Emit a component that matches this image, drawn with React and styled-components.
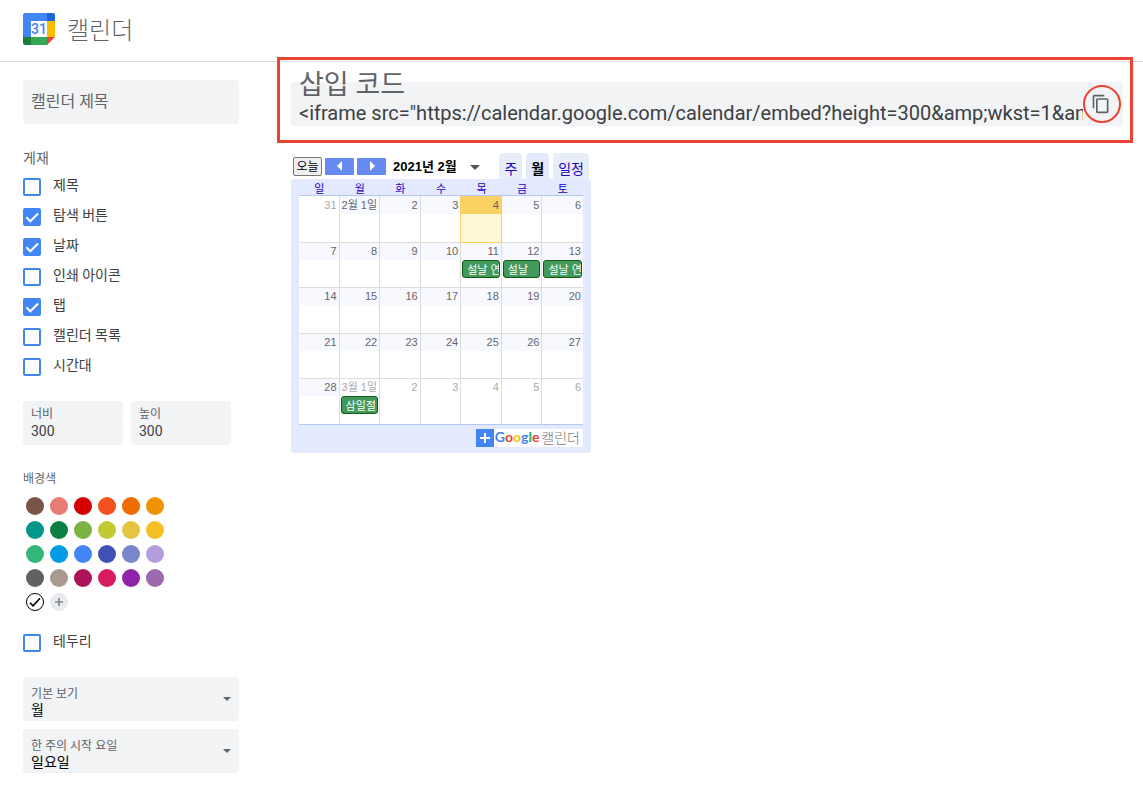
import styled, { createGlobalStyle } from "styled-components";

import { useState } from "react";

const COLORS = {
  text: "#3c4043",
  muted: "#5f6368",
  field: "#f1f3f4",
  blue: "#4285f4",
  highlight: "#ea4335",
  calendar: "#e3e9ff",
  calendarLink: "#2200cc",
};

const EMBED_CODE =
  '<iframe src="https://calendar.google.com/calendar/embed?height=300&amp;wkst=1&amp;bgcolor=%23ffffff&amp;ctz=Asia%2FSeoul" style="border-width:0" width="300" height="300"></iframe>';

const SWATCHES = [
  "#795548", "#e67c73", "#d50000", "#f4511e", "#ef6c00", "#f09300",
  "#009688", "#0b8043", "#7cb342", "#c0ca33", "#e4c441", "#f6bf26",
  "#33b679", "#039be5", "#4285f4", "#3f51b5", "#7986cb", "#b39ddb",
  "#616161", "#a79b8e", "#ad1457", "#d81b60", "#8e24aa", "#9e69af",
];

const WEEKDAYS = ["일", "월", "화", "수", "목", "금", "토"];

const WEEKS = [
  [
    { day: "31", other: true },
    { day: "2월 1일" },
    { day: "2" },
    { day: "3" },
    { day: "4", today: true },
    { day: "5" },
    { day: "6" },
  ],
  [
    { day: "7" },
    { day: "8" },
    { day: "9" },
    { day: "10" },
    { day: "11", event: "설날 연휴" },
    { day: "12", event: "설날" },
    { day: "13", event: "설날 연휴" },
  ],
  ["14", "15", "16", "17", "18", "19", "20"].map((day) => ({ day })),
  ["21", "22", "23", "24", "25", "26", "27"].map((day) => ({ day })),
  [
    { day: "28" },
    { day: "3월 1일", other: true, event: "삼일절" },
    { day: "2", other: true },
    { day: "3", other: true },
    { day: "4", other: true },
    { day: "5", other: true },
    { day: "6", other: true },
  ],
];

const CalendarLogo = () => (
  <svg width="32" height="32" viewBox="0 0 32 32" aria-hidden="true">
    <path d="M2 0h22v8H8v16H0V2a2 2 0 0 1 2-2z" fill="#4285f4" />
    <path d="M24 0h6a2 2 0 0 1 2 2v6h-8z" fill="#1967d2" />
    <path d="M24 8h8v16h-8z" fill="#fbbc04" />
    <path d="M8 24h16v8H8z" fill="#34a853" />
    <path d="M0 24h8v8H2a2 2 0 0 1-2-2z" fill="#188038" />
    <path d="M24 24h8l-8 8z" fill="#ea4335" />
    <path d="M8 8h16v16H8z" fill="#fff" />
    <text
      x="16"
      y="21"
      textAnchor="middle"
      fontFamily="Roboto, sans-serif"
      fontSize="14"
      fontWeight="500"
      fill="#4285f4"
    >
      31
    </text>
  </svg>
);

const CopyIcon = () => (
  <svg width="20" height="20" viewBox="0 0 24 24" aria-hidden="true">
    <path
      d="M16 1H4c-1.1 0-2 .9-2 2v14h2V3h12V1zm3 4H8c-1.1 0-2 .9-2 2v14c0 1.1.9 2 2 2h11c1.1 0 2-.9 2-2V7c0-1.1-.9-2-2-2zm0 16H8V7h11v14z"
      fill={COLORS.muted}
    />
  </svg>
);

const Checkbox = ({ label, defaultChecked = false }) => {
  const [checked, setChecked] = useState(defaultChecked);

  return (
    <CheckLabel>
      <CheckStack>
        <CheckInput
          type="checkbox"
          checked={checked}
          onChange={(e) => setChecked(e.target.checked)}
        />
        {checked && (
          <CheckMark viewBox="0 0 18 18" aria-hidden="true">
            <path
              d="M3.3 9.3l4 4 7.8-7.8"
              fill="none"
              stroke="#fff"
              strokeWidth="2"
            />
          </CheckMark>
        )}
      </CheckStack>
      <CheckText>{label}</CheckText>
    </CheckLabel>
  );
};

const SelectField = ({ id, label, options }) => (
  <SelectBox>
    <SmallLabel htmlFor={id}>{label}</SmallLabel>
    <Select id={id}>
      {options.map((option) => (
        <option key={option}>{option}</option>
      ))}
    </Select>
    <SelectArrow viewBox="0 0 8 4" aria-hidden="true">
      <path d="M0 0h8L4 4z" fill={COLORS.muted} />
    </SelectArrow>
  </SelectBox>
);

const Sidebar = () => (
  <Aside>
    <TitleInput type="text" placeholder="캘린더 제목" aria-label="캘린더 제목" />

    <Group>
      <GroupTitle>게재</GroupTitle>
      <Checkbox label="제목" />
      <Checkbox label="탐색 버튼" defaultChecked />
      <Checkbox label="날짜" defaultChecked />
      <Checkbox label="인쇄 아이콘" />
      <Checkbox label="탭" defaultChecked />
      <Checkbox label="캘린더 목록" />
      <Checkbox label="시간대" />
    </Group>

    <SizeRow>
      <SizeBox>
        <SmallLabel htmlFor="width">너비</SmallLabel>
        <SizeInput id="width" type="text" defaultValue="300" />
      </SizeBox>
      <SizeBox>
        <SmallLabel htmlFor="height">높이</SmallLabel>
        <SizeInput id="height" type="text" defaultValue="300" />
      </SizeBox>
    </SizeRow>

    <ColorTitle>배경색</ColorTitle>
    <Swatches>
      {SWATCHES.map((color) => (
        <Swatch key={color} $color={color} aria-label={color} />
      ))}
      <Swatch $color="#ffffff" $selected aria-label="#ffffff">
        <svg width="16" height="16" viewBox="0 0 16 16" aria-hidden="true">
          <path
            d="M3 8.8l3 3 7-7.6"
            fill="none"
            stroke="#000"
            strokeWidth="1.6"
          />
        </svg>
      </Swatch>
      <Swatch $color="#e8eaed" aria-label="맞춤 색상 추가">
        <svg width="18" height="18" viewBox="0 0 18 18" aria-hidden="true">
          <path d="M5 9h8M9 5v8" stroke="#80868b" strokeWidth="1.6" />
        </svg>
      </Swatch>
    </Swatches>

    <Checkbox label="테두리" />

    <Selects>
      <SelectField
        id="view"
        label="기본 보기"
        options={["월", "주", "일정"]}
      />
      <SelectField
        id="weekStart"
        label="한 주의 시작 요일"
        options={["일요일", "월요일", "토요일"]}
      />
    </Selects>
  </Aside>
);

const EmbedCode = () => (
  <EmbedArea>
    <EmbedField>
      <EmbedText>
        <EmbedLabel htmlFor="embed">삽입 코드</EmbedLabel>
        <EmbedInput id="embed" type="text" readOnly value={EMBED_CODE} />
      </EmbedText>
      <CopyButton
        aria-label="복사"
        onClick={() => navigator.clipboard.writeText(EMBED_CODE)}
      >
        <CopyIcon />
      </CopyButton>
    </EmbedField>
    <Highlight />
  </EmbedArea>
);

const CalendarPreview = () => (
  <Preview>
    <PreviewNav>
      <TodayButton>오늘</TodayButton>
      <ArrowButton aria-label="이전">
        <svg width="6" height="10" viewBox="0 0 6 10" aria-hidden="true">
          <path d="M5 0v10L0 5z" fill="#fff" />
        </svg>
      </ArrowButton>
      <ArrowButton aria-label="다음">
        <svg width="6" height="10" viewBox="0 0 6 10" aria-hidden="true">
          <path d="M1 0v10l5-5z" fill="#fff" />
        </svg>
      </ArrowButton>
      <MonthButton>
        2021년 2월
        <svg width="10" height="5" viewBox="0 0 10 5" aria-hidden="true">
          <path d="M0 0h10L5 5z" fill="#555" />
        </svg>
      </MonthButton>
      <Tabs>
        <Tab>주</Tab>
        <Tab $active>월</Tab>
        <Tab>일정</Tab>
      </Tabs>
    </PreviewNav>
    <PreviewBody>
      <MonthTable>
        <thead>
          <tr>
            {WEEKDAYS.map((name) => (
              <Weekday key={name}>{name}</Weekday>
            ))}
          </tr>
        </thead>
        <tbody>
          {WEEKS.map((week, index) => (
            <WeekRow key={index}>
              {week.map((item) => (
                <DayCell key={item.day} $today={item.today}>
                  <DayNumber $today={item.today} $other={item.other}>
                    {item.day}
                  </DayNumber>
                  {item.event && <EventChip>{item.event}</EventChip>}
                </DayCell>
              ))}
            </WeekRow>
          ))}
        </tbody>
      </MonthTable>
      <PreviewFooter>
        <GoogleLink href="#calendar">
          <PlusBox>
            <svg width="12" height="12" viewBox="0 0 12 12" aria-hidden="true">
              <path d="M1 6h10M6 1v10" stroke="#fff" strokeWidth="2" />
            </svg>
          </PlusBox>
          <GoogleText>
            <Letter $color="#4285f4">G</Letter>
            <Letter $color="#ea4335">o</Letter>
            <Letter $color="#fbbc04">o</Letter>
            <Letter $color="#4285f4">g</Letter>
            <Letter $color="#34a853">l</Letter>
            <Letter $color="#ea4335">e</Letter>
          </GoogleText>
          <ProductText>캘린더</ProductText>
        </GoogleLink>
      </PreviewFooter>
    </PreviewBody>
  </Preview>
);

const App = () => {
  return (
    <>
      <GlobalStyle />
      <Header>
        <CalendarLogo />
        <AppName>캘린더</AppName>
      </Header>
      <Page>
        <Sidebar />
        <Main>
          <EmbedCode />
          <CalendarPreview />
        </Main>
      </Page>
    </>
  );
};

export default App;

const GlobalStyle = createGlobalStyle`
  * {
    box-sizing: border-box;
  }

  body {
    margin: 0;
    background: #fff;
    color: ${COLORS.text};
    font-family: Roboto, "Noto Sans CJK KR", sans-serif;
    font-size: 14px;
  }

  button, input, select {
    font-family: inherit;
    margin: 0;
    padding: 0;
    border: none;
    outline: none;
    background: none;
  }

  button {
    cursor: pointer;
  }

  svg {
    display: block;
    flex: none;
  }
`;

const Header = styled.header`
  display: flex;
  align-items: center;
  gap: 12px;
  height: 62px;
  padding: 0 23px 3px;
  border-bottom: 1px solid #dadce0;
`;

const AppName = styled.h1`
  margin: 0;
  padding-top: 4px;
  font-size: 24px;
  font-weight: 300;
  line-height: 32px;
  color: ${COLORS.muted};
`;

const Page = styled.div`
  display: flex;
  align-items: flex-start;
  gap: 52px;
  padding: 18px 20px 20px 23px;
`;

const Aside = styled.aside`
  display: flex;
  flex-direction: column;
  flex: none;
  width: 216px;
`;

const TitleInput = styled.input`
  height: 44px;
  padding: 0 8px 2px;
  border-radius: 4px;
  background: ${COLORS.field};
  font-size: 16px;
  color: ${COLORS.text};

  &::placeholder {
    color: ${COLORS.muted};
  }
`;

const Group = styled.section`
  display: flex;
  flex-direction: column;
  margin-top: 24px;
`;

const GroupTitle = styled.h2`
  margin: 0 0 4px;
  font-size: 14px;
  font-weight: 400;
  line-height: 20px;
  color: ${COLORS.muted};
`;

const CheckLabel = styled.label`
  display: flex;
  align-items: center;
  gap: 12px;
  height: 30px;
  cursor: pointer;
`;

const CheckStack = styled.span`
  display: grid;
  width: 18px;
  height: 18px;
`;

const CheckInput = styled.input`
  grid-area: 1 / 1;
  appearance: none;
  width: 18px;
  height: 18px;
  border: 2px solid ${COLORS.blue};
  border-radius: 2px;
  background: ${(props) => (props.checked ? COLORS.blue : "#fff")};
`;

const CheckMark = styled.svg`
  grid-area: 1 / 1;
  width: 18px;
  height: 18px;
  pointer-events: none;
`;

const CheckText = styled.span`
  padding-bottom: 4px;
  line-height: 20px;
`;

const SizeRow = styled.div`
  display: flex;
  gap: 8px;
  margin-top: 19px;
`;

const SizeBox = styled.div`
  display: flex;
  flex-direction: column;
  width: 100px;
  height: 44px;
  padding: 5px 8px 4px;
  border-radius: 4px;
  background: ${COLORS.field};
`;

const SmallLabel = styled.label`
  font-size: 12px;
  line-height: 16px;
  color: ${COLORS.muted};
`;

const SizeInput = styled.input`
  width: 100%;
  height: 18px;
  font-size: 14px;
  color: ${COLORS.text};
`;

const ColorTitle = styled.h2`
  margin: 25px 0 7px;
  font-size: 12px;
  font-weight: 400;
  line-height: 18px;
  color: ${COLORS.muted};
`;

const Swatches = styled.div`
  display: grid;
  grid-template-columns: repeat(6, 18px);
  gap: 6px;
  margin: 2px 3px 17px;
`;

const Swatch = styled.button`
  display: grid;
  place-items: center;
  width: 18px;
  height: 18px;
  border: ${(props) => (props.$selected ? "1px solid #000" : "none")};
  border-radius: 50%;
  background: ${(props) => props.$color};
`;

const Selects = styled.div`
  display: flex;
  flex-direction: column;
  gap: 8px;
  margin-top: 19px;
`;

const SelectBox = styled.div`
  display: grid;
  grid-template-columns: 1fr 8px;
  grid-template-rows: 16px 16px;
  align-items: center;
  height: 44px;
  padding: 9px 8px 3px;
  border-radius: 4px;
  background: ${COLORS.field};
`;

const Select = styled.select`
  grid-area: 2 / 1 / 3 / 3;
  appearance: none;
  height: 18px;
  font-size: 14px;
  line-height: 18px;
  color: #000;
`;

const SelectArrow = styled.svg`
  grid-area: 1 / 2 / 3 / 3;
  width: 8px;
  height: 4px;
  margin-bottom: 6px;
  pointer-events: none;
`;

const Main = styled.main`
  flex: 1;
  min-width: 0;
  padding-top: 2px;
`;

const EmbedArea = styled.section`
  position: relative;
`;

const EmbedField = styled.div`
  display: flex;
  align-items: center;
  height: 44px;
  padding: 0 2px 0 8px;
  border-radius: 4px;
  background: ${COLORS.field};
`;

/* The enlarged label grows upwards over the edge of the field. */
const EmbedText = styled.div`
  display: flex;
  flex: 1;
  flex-direction: column;
  justify-content: flex-end;
  min-width: 0;
  height: 44px;
`;

const EmbedLabel = styled.label`
  font-size: 27px;
  line-height: 30px;
  color: ${COLORS.muted};
`;

const EmbedInput = styled.input`
  flex: none;
  width: 100%;
  height: 26px;
  font-size: 20px;
  color: ${COLORS.text};
`;

const CopyButton = styled.button`
  display: grid;
  place-items: center;
  flex: none;
  width: 38px;
  height: 38px;
  padding-right: 2px;
  border: 2px solid ${COLORS.highlight};
  border-radius: 50%;
`;

const Highlight = styled.div`
  position: absolute;
  inset: -25px -10px -17px -14px;
  border: 3px solid ${COLORS.highlight};
  pointer-events: none;
`;

const Preview = styled.section`
  width: 300px;
  margin-top: 27px;
  font-family: "Liberation Sans", "Noto Sans CJK KR", sans-serif;
`;

const PreviewNav = styled.div`
  display: flex;
  align-items: center;
  gap: 3px;
  height: 26px;
  padding: 0 2px;
`;

const TodayButton = styled.button`
  width: 29px;
  height: 19px;
  border: 1px solid #767676;
  border-radius: 2px;
  background: #efefef;
  font-size: 12px;
  line-height: 19px;
  color: #000;
`;

const ArrowButton = styled.button`
  display: grid;
  place-items: center;
  width: 29px;
  height: 17px;
  border-radius: 1px;
  background: #668aef;
`;

const MonthButton = styled.button`
  display: flex;
  align-items: center;
  gap: 13px;
  padding: 2px 0 0 4px;
  font-size: 13px;
  font-weight: 700;
  line-height: 20px;
  color: #000;
`;

const Tabs = styled.div`
  display: flex;
  gap: 4px;
  margin-left: auto;
`;

const Tab = styled.button`
  height: 26px;
  padding: 6px 5px 0;
  border-radius: 4px 4px 0 0;
  background: ${(props) => (props.$active ? COLORS.calendar : "#e8eef7")};
  font-size: 14px;
  font-weight: ${(props) => (props.$active ? 700 : 400)};
  line-height: 20px;
  color: ${(props) => (props.$active ? "#000" : COLORS.calendarLink)};
`;

const PreviewBody = styled.div`
  padding: 0 8px 6px;
  border-radius: 4px;
  background: ${COLORS.calendar};
`;

const MonthTable = styled.table`
  width: 100%;
  border-collapse: separate;
  border-spacing: 0;
  border-bottom: 1px solid #b4c8f8;
  table-layout: fixed;
`;

const Weekday = styled.th`
  height: 17px;
  padding: 4px 0 0;
  border-bottom: 1px solid #b4c8f8;
  font-size: 11px;
  font-weight: 400;
  line-height: 12px;
  color: ${COLORS.calendarLink};
`;

const DayCell = styled.td`
  padding: 0;
  border-right: 1px solid #ddd;
  border-bottom: 1px solid #ddd;
  background: #fff;
  vertical-align: top;

  &:last-child {
    border-right: none;
  }

  ${(props) =>
    props.$today &&
    `
    border-color: #fad163;
    background: #fff7d7;
    box-shadow: -1px 0 #fad163;
  `}
`;

const DayNumber = styled.div`
  height: 17px;
  padding-right: 2px;
  overflow: hidden;
  background: ${(props) =>
    props.$today ? "#fad163" : props.$other ? "#fff" : "#f8f9ff"};
  font-size: 11px;
  line-height: 17px;
  text-align: right;
  white-space: nowrap;
  color: ${(props) => (props.$other ? "#aaa" : "#666")};
`;

const WeekRow = styled.tr`
  height: 46px;

  &:nth-child(even),
  &:last-child {
    height: 45px;
  }

  &:first-child {
    height: 47px;
  }

  &:first-child ${DayNumber} {
    height: 18px;
    line-height: 19px;
  }

  &:last-child ${DayCell} {
    border-bottom: none;
  }
`;

const EventChip = styled.div`
  height: 18px;
  margin: 0 1px;
  padding-left: 4px;
  overflow: hidden;
  border: 1px solid #125a12;
  border-radius: 3px;
  background: #41995c;
  font-size: 11px;
  line-height: 18px;
  white-space: nowrap;
  color: #fff;
`;

const PreviewFooter = styled.div`
  display: flex;
  justify-content: flex-end;
  padding-top: 4px;
`;

const GoogleLink = styled.a`
  display: flex;
  align-items: center;
  height: 18px;
  padding-right: 3px;
  background: #fff;
  text-decoration: none;
`;

const PlusBox = styled.span`
  display: grid;
  place-items: center;
  width: 18px;
  height: 18px;
  background: ${COLORS.blue};
`;

const GoogleText = styled.span`
  padding: 0 2px 3px 1px;
  font-family: Lato, sans-serif;
  font-size: 14px;
  font-weight: 700;
  line-height: 16px;
`;

const Letter = styled.span`
  color: ${(props) => props.$color};
`;

const ProductText = styled.span`
  font-size: 14px;
  font-weight: 300;
  line-height: 18px;
  color: #777;
`;
